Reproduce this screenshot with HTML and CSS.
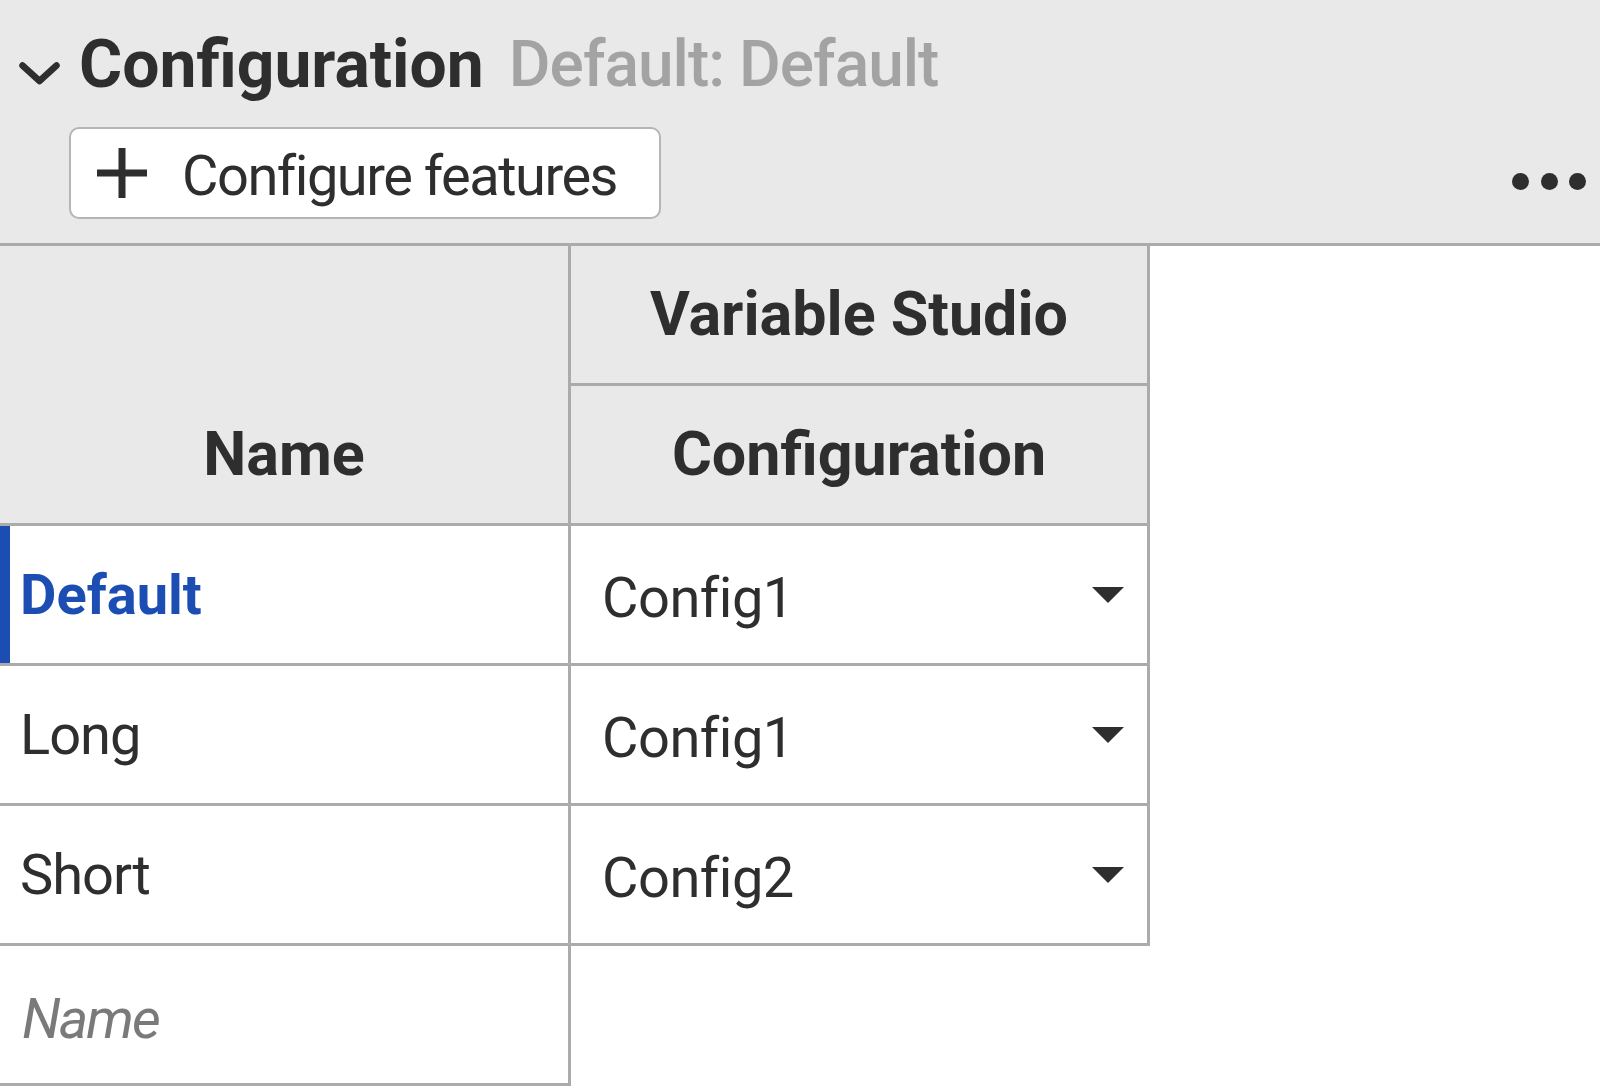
FILE: index.html
```html
<!DOCTYPE html>
<html lang="en">
<head>
<meta charset="utf-8">
<title>Configuration</title>
<link rel="stylesheet" href="styles.css">
</head>
<body>
<div class="panel">
  <header class="cfg-header">
    <div class="title-row">
      <svg class="chevron" viewBox="0 0 41 23" aria-hidden="true"><polyline points="3.5,3.5 20.5,19 37.5,3.5" fill="none" stroke="#2e2e2e" stroke-width="6.5" stroke-linecap="round" stroke-linejoin="round"/></svg>
      <h1 class="title">Configuration</h1>
      <span class="subtitle">Default: Default</span>
    </div>
    <div class="toolbar">
      <button class="btn-configure" type="button">
        <svg class="plus" viewBox="0 0 50 50" aria-hidden="true"><path d="M25 0V50M0 25H50" stroke="#2e2e2e" stroke-width="7"/></svg>
        <span>Configure features</span>
      </button>
      <div class="more" aria-label="More"><span class="dot"></span><span class="dot"></span><span class="dot"></span></div>
    </div>
  </header>

  <div class="grid">
    <div class="cell head name-head">Name</div>
    <div class="cell head">Variable Studio</div>
    <div class="cell head">Configuration</div>

    <div class="cell name active">Default</div>
    <div class="cell select"><span>Config1</span><svg class="caret" viewBox="0 0 32 16" aria-hidden="true"><polygon points="0,0 32,0 16,16" fill="#2e2e2e"/></svg></div>

    <div class="cell name">Long</div>
    <div class="cell select"><span>Config1</span><svg class="caret" viewBox="0 0 32 16" aria-hidden="true"><polygon points="0,0 32,0 16,16" fill="#2e2e2e"/></svg></div>

    <div class="cell name">Short</div>
    <div class="cell select"><span>Config2</span><svg class="caret" viewBox="0 0 32 16" aria-hidden="true"><polygon points="0,0 32,0 16,16" fill="#2e2e2e"/></svg></div>

    <div class="cell name placeholder">Name</div>
    <div class="blank"></div>
  </div>
</div>
</body>
</html>
```

FILE: styles.css
```css
* {
  box-sizing: border-box;
}

body {
  margin: 0;
  font-family: Roboto, "Noto Sans", sans-serif;
  color: #2e2e2e;
  background: #ffffff;
}

.cfg-header {
  background: #e9e9e9;
  border-bottom: 3px solid #ababab;
  height: 246px;
}

.title-row {
  display: flex;
  align-items: flex-start;
  height: 127px;
  padding-left: 19px;
}

.chevron {
  width: 41px;
  height: 23px;
  margin-top: 62px;
}

.title {
  margin: 32px 0 0 19px;
  font-size: 66px;
  line-height: 66px;
  font-weight: 700;
}

.subtitle {
  margin: 33px 0 0 25px;
  font-size: 64px;
  line-height: 64px;
  font-weight: 500;
  letter-spacing: -1px;
  color: #a3a3a3;
}

.toolbar {
  display: flex;
  align-items: flex-start;
  height: 116px;
}

.btn-configure {
  margin-left: 69px;
  height: 92px;
  display: flex;
  align-items: center;
  gap: 35px;
  padding: 5px 42px 0 26px;
  background: #ffffff;
  border: 2px solid #b5b5b5;
  border-radius: 10px;
  font-family: inherit;
  font-size: 56px;
  letter-spacing: -1.5px;
  color: #2e2e2e;
}

.plus {
  width: 50px;
  height: 50px;
  flex: none;
  margin-top: -5px;
}

.more {
  margin-left: auto;
  margin-top: 46px;
  margin-right: 14px;
  display: flex;
  gap: 11.5px;
}

.dot {
  width: 17px;
  height: 17px;
  border-radius: 50%;
  background: #2e2e2e;
}

.grid {
  display: grid;
  grid-template-columns: 571px 579px;
  grid-auto-rows: 140px;
}

.cell {
  display: flex;
  align-items: center;
  border-right: 3px solid #ababab;
  border-bottom: 3px solid #ababab;
  font-size: 56px;
  line-height: 66px;
}

.head {
  background: #e9e9e9;
  justify-content: center;
  font-size: 61px;
  line-height: 71px;
  font-weight: 700;
}

.name-head {
  grid-row: span 2;
  align-items: flex-end;
  padding-bottom: 33px;
}

.name {
  padding-left: 20px;
  letter-spacing: -1px;
}

.active {
  color: #1b4db2;
  font-weight: 700;
  letter-spacing: 0;
  box-shadow: inset 10px 0 0 #1b4db2;
}

.placeholder {
  font-style: italic;
  color: #7a7a7a;
  padding-left: 22px;
  padding-top: 8px;
  letter-spacing: -2px;
}

.select {
  justify-content: space-between;
  padding: 6px 23px 0 31px;
  letter-spacing: -0.5px;
}

.caret {
  width: 32px;
  height: 16px;
  flex: none;
  margin-top: -6px;
}

.blank {
  border: none;
}
```
